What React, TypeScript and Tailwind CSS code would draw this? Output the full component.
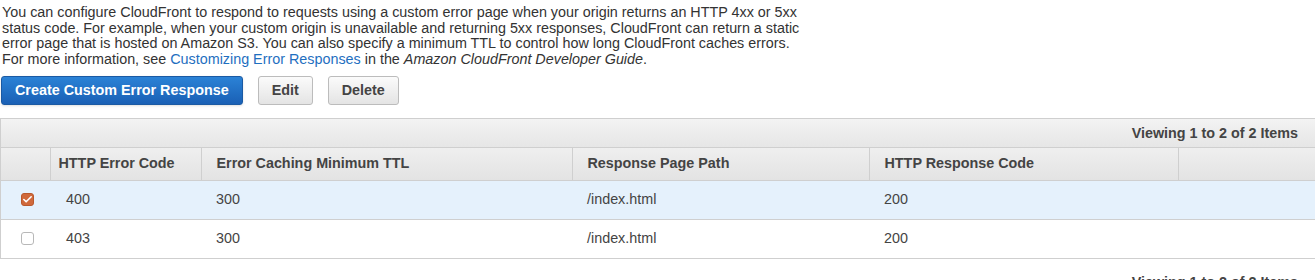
import { Check } from 'lucide-react';

const rows = [
  { code: '400', ttl: '300', path: '/index.html', resp: '200', selected: true },
  { code: '403', ttl: '300', path: '/index.html', resp: '200', selected: false },
];

export default function App() {
  return (
    <div className="w-[1315px] h-[280px] overflow-hidden bg-white font-['Liberation_Sans',Arial,sans-serif] text-[14.35px] text-[#333]">
      {/* Intro */}
      <p className="pt-[5px] pl-[2px] max-w-[806px] leading-[15.6px]">
        You can configure CloudFront to respond to requests using a custom error page when your origin returns an HTTP 4xx or 5xx
        status code. For example, when your custom origin is unavailable and returning 5xx responses, CloudFront can return a static
        error page that is hosted on Amazon S3. You can also specify a minimum TTL to control how long CloudFront caches errors.
        For more information, see{' '}
        <a href="#" className="text-[#1f6fbf]">
          Customizing Error Responses
        </a>{' '}
        in the <i>Amazon CloudFront Developer Guide</i>.
      </p>

      {/* Actions */}
      <div className="flex items-center gap-[15px] mt-[9px] pl-[1px]">
        <button className="h-[29px] px-[13px] rounded-[3px] border border-[#1b5aa3] bg-gradient-to-b from-[#2b82d6] to-[#1a60b5] text-white font-bold shadow-sm">
          Create Custom Error Response
        </button>
        <button className="h-[29px] px-[13px] rounded-[3px] border border-[#bcbcbc] bg-gradient-to-b from-[#fbfbfb] to-[#e4e4e4] text-[#444] font-bold">
          Edit
        </button>
        <button className="h-[29px] px-[13px] rounded-[3px] border border-[#bcbcbc] bg-gradient-to-b from-[#fbfbfb] to-[#e4e4e4] text-[#444] font-bold">
          Delete
        </button>
      </div>

      {/* Table */}
      <div className="mt-[13px] border-t border-l border-[#cfcfcf]">
        <div className="h-[29px] flex items-center justify-end pr-[17px] bg-gradient-to-b from-[#f3f3f3] to-[#e6e6e6] border-b border-[#cfcfcf] font-bold text-[#444]">
          Viewing 1 to 2 of 2 Items
        </div>
        <table className="w-full border-collapse table-fixed">
          <colgroup>
            <col className="w-[49px]" />
            <col className="w-[151px]" />
            <col className="w-[371px]" />
            <col className="w-[297px]" />
            <col className="w-[309px]" />
            <col />
          </colgroup>
          <thead>
            <tr className="h-[32px] bg-gradient-to-b from-[#efefef] to-[#e3e3e3] text-left font-bold text-[#444]">
              <th className="border-b border-[#cfcfcf]" />
              <th className="pl-[8px] border-l border-b border-[#cfcfcf] font-bold">HTTP Error Code</th>
              <th className="pl-[15px] border-l border-b border-[#cfcfcf] font-bold">Error Caching Minimum TTL</th>
              <th className="pl-[15px] border-l border-b border-[#cfcfcf] font-bold">Response Page Path</th>
              <th className="pl-[15px] border-l border-b border-[#cfcfcf] font-bold">HTTP Response Code</th>
              <th className="border-l border-b border-[#cfcfcf]" />
            </tr>
          </thead>
          <tbody>
            {rows.map((r) => (
              <tr
                key={r.code}
                className={`h-[39px] border-b border-[#cfcfcf] text-[#444] ${r.selected ? 'bg-[#e5f1fc]' : 'bg-white'}`}
              >
                <td className="pl-[20px]">
                  {r.selected ? (
                    <span className="flex items-center justify-center w-[13px] h-[13px] rounded-[3px] bg-[#d0693b] border border-[#b9582c]">
                      <Check className="w-[11px] h-[11px] text-white" strokeWidth={3.5} />
                    </span>
                  ) : (
                    <span className="block w-[13px] h-[13px] rounded-[3px] bg-white border border-[#b8b8b8]" />
                  )}
                </td>
                <td className="pl-[16px]">{r.code}</td>
                <td className="pl-[15px]">{r.ttl}</td>
                <td className="pl-[15px]">{r.path}</td>
                <td className="pl-[15px]">{r.resp}</td>
                <td />
              </tr>
            ))}
          </tbody>
        </table>
      </div>

      <div className="flex justify-end pr-[17px] pt-[13px] font-bold text-[#444]">Viewing 1 to 2 of 2 Items</div>
    </div>
  );
}
